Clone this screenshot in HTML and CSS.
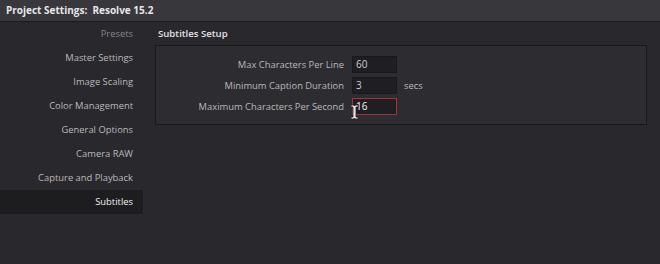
FILE: index.html
```html
<!DOCTYPE html>
<html lang="en">
<head>
    <meta charset="UTF-8">
    <title>Project Settings</title>
    <link rel="stylesheet" href="styles.css">
</head>
<body>
<div class="titlebar">Project Settings:&nbsp; Resolve 15.2</div>
<div class="main">
    <ul class="sidebar">
        <li class="dim">Presets</li>
        <li>Master Settings</li>
        <li>Image Scaling</li>
        <li>Color Management</li>
        <li>General Options</li>
        <li>Camera RAW</li>
        <li>Capture and Playback</li>
        <li class="active">Subtitles</li>
    </ul>
    <div class="content">
        <h2>Subtitles Setup</h2>
        <div class="panel">
            <div class="row">
                <label>Max Characters Per Line</label>
                <div class="field">60</div>
            </div>
            <div class="row">
                <label>Minimum Caption Duration</label>
                <div class="field">3</div>
                <span class="unit">secs</span>
            </div>
            <div class="row">
                <label>Maximum Characters Per Second</label>
                <div class="field focus">16
                    <svg class="ibeam" width="9" height="16" viewBox="0 0 9 16">
                        <path d="M1 1h2.5l1 1 1-1H8v2H6v10h2v2H5.5l-1-1-1 1H1v-2h2V3H1z" fill="#e8e8e8" stroke="#222" stroke-width="0.8"/>
                    </svg>
                </div>
            </div>
        </div>
    </div>
</div>
</body>
</html>
```

FILE: styles.css
```css
body { margin: 0; background: #29282c; font-family: 'Open Sans', sans-serif; font-size: 9.4px; color: #b9b9bb; height: 264px; overflow: hidden; }
.titlebar { height: 21px; line-height: 21px; padding-left: 6px; background: #38373b; border-bottom: 1px solid #1b1a1d; color: #e6e6e8; font-weight: 700; font-size: 10px; }
.main { display: flex; }
.sidebar { list-style: none; margin: 0; padding: 0; width: 143px; }
.sidebar li { height: 24px; line-height: 24px; text-align: right; padding-right: 10px; }
.sidebar li.dim { color: #858487; }
.sidebar li.active { background: #1d1c1f; color: #f0f0f2; }
.content { flex: 1; padding: 0 13px 0 12px; }
h2 { margin: 0; height: 23px; line-height: 24px; padding-left: 3px; font-size: 9.6px; font-weight: 600; color: #e2e2e4; }
.panel { background: #2d2c30; border: 1px solid #19181b; height: 58px; padding: 10px 0 10px; display: flex; flex-direction: column; gap: 4px; }
.row { display: flex; align-items: center; height: 17px; }
.row label { width: 188px; text-align: right; margin-right: 8px; }
.field { position: relative; width: 40px; height: 15px; line-height: 15px; padding-left: 3px; background: #1f1e22; border: 1px solid #19181b; color: #cfcfd1; font-size: 10px; }
.field.focus { border-color: #a5313b; color: #f4f4f4; }
.unit { margin-left: 7px; }
.ibeam { position: absolute; left: -3px; top: 5px; }
```
